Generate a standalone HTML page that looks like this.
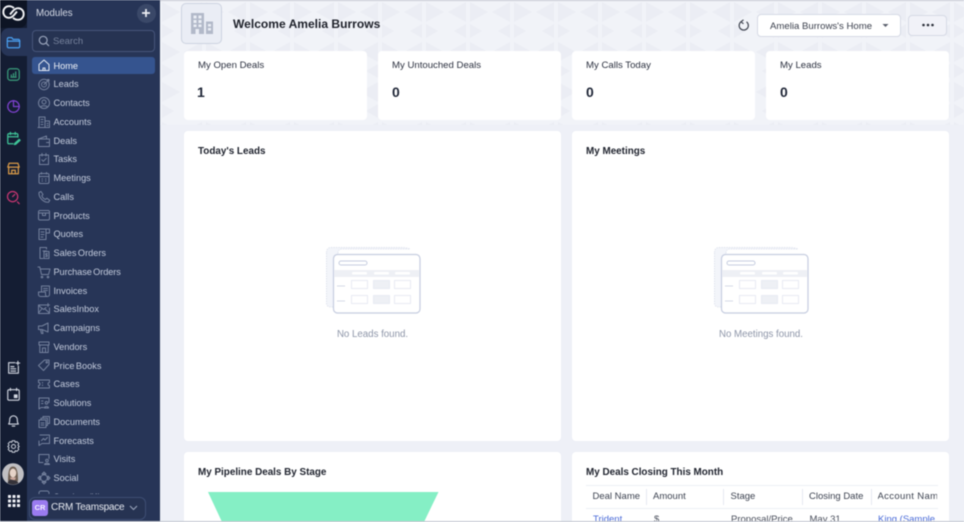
<!DOCTYPE html>
<html><head><meta charset="utf-8"><title>CRM Home</title>
<style>
*{box-sizing:border-box;margin:0;padding:0}
html,body{width:964px;height:522px;overflow:hidden;background:#eef0f7;font-family:"Liberation Sans",sans-serif}
#root{position:relative;width:964px;height:522px;overflow:hidden;filter:blur(.4px)}
.abs{position:absolute}
.t{position:absolute;white-space:nowrap}
#rail{left:0;top:0;width:27px;height:522px;background:#141d33}
#side{left:27px;top:0;width:133px;height:522px;background:#273557}
#logoTile{left:0;top:0;width:27px;height:28px;background:#0d1424;border-radius:0 0 8px 0}
#active{left:1px;top:28px;width:26px;height:28px;background:#273557;border-radius:8px 0 0 8px}
.item{position:absolute;left:53.5px;font-size:9.2px;line-height:12px;color:#c3cbdc;white-space:nowrap;word-spacing:-1.1px}
.ic{position:absolute;left:37px;width:14px;height:14px;fill:none;stroke:#74819d;stroke-width:1;stroke-linecap:round;stroke-linejoin:round}
.r{position:absolute;left:6px;width:15px;height:15px;fill:none;stroke-width:1.4;stroke-linecap:round;stroke-linejoin:round}
.card{position:absolute;background:#fff;border-radius:4px}
.ct{position:absolute;font-size:9.6px;line-height:12px;color:#2c3140;white-space:nowrap}
.num{position:absolute;font-size:14px;line-height:16px;font-weight:bold;color:#1f2637}
.h{position:absolute;font-size:9.9px;line-height:12px;font-weight:bold;color:#20242f;white-space:nowrap}
.nf{position:absolute;font-size:9.7px;line-height:12px;color:#8d95a8;white-space:nowrap;text-align:center;width:120px}
.th{position:absolute;top:491px;font-size:9.5px;color:#3c4250;white-space:nowrap;line-height:12px}
.td{position:absolute;top:514px;font-size:9.5px;color:#4a4f5c;white-space:nowrap;line-height:12px}
.sep{position:absolute;top:489px;width:1px;height:16px;background:#e6e9f2}
</style></head><body>
<div id="root">
<svg class="abs" style="left:160px;top:0" width="804" height="125">
<defs><pattern id="p" width="44" height="40" patternUnits="userSpaceOnUse">
<path d="M2 2L20 12L2 22Z M42 2L24 12L42 22Z M2 24L14 31L2 38Z M42 24L30 31L42 38Z" fill="#ebedf4"/>
</pattern></defs>
<rect width="804" height="125" fill="#f1f3f8"/><rect width="804" height="125" fill="url(#p)"/>
</svg>
<div class="abs" style="left:160px;top:0;width:804px;height:1px;background:#c6cad4"></div>

<div id="rail" class="abs"></div><div id="side" class="abs"></div>
<div id="logoTile" class="abs"></div><div id="active" class="abs"></div>

<svg class="abs" style="left:2px;top:5px" width="23" height="16" viewBox="0 0 23 16" fill="none" stroke="#f2f3f6" stroke-width="1.9">
<path d="M12 3.2C10.5 1.800 9 1.200 7 1.200C3.600 1.200 1.300 3.800 1.300 7S3.600 12.800 7 12.800C9.500 12.800 11 11.300 12.500 9.500L15 6.500"/>
<path d="M11 12.800C12.500 14.200 14 14.800 16 14.800C19.400 14.800 21.700 12.200 21.700 9S19.400 3.200 16 3.200C13.500 3.200 12 4.700 10.500 6.500L8 9.500"/>
</svg>

<svg class="r" style="top:34.500px;stroke:#4a9ff0" viewBox="0 0 17 17"><path d="M1.500 4.500A1.500 1.500 0 0 1 3 3H6.500L8 5H14A1.500 1.500 0 0 1 15.500 6.500V13A1.500 1.500 0 0 1 14 14.500H3A1.500 1.500 0 0 1 1.500 13Z"/><path d="M1.500 7H15.500"/></svg>
<svg class="r" style="top:66.500px;stroke:#3a9d7c" viewBox="0 0 17 17"><rect x="2" y="2" width="13" height="13" rx="3"/><path d="M5.500 11.500H11.500M6 9V10M8.500 7.500V10M11 5.500V10"/></svg>
<svg class="r" style="top:98.500px;stroke:#7f42d0" viewBox="0 0 17 17"><circle cx="8.500" cy="8.500" r="6.500"/><path d="M8.500 2V8.500H15"/></svg>
<svg class="r" style="top:130.500px;stroke:#3fc498" viewBox="0 0 17 17"><path d="M13.500 7V4.500A1.500 1.500 0 0 0 12 3H3.500A1.500 1.500 0 0 0 2 4.500V13A1.500 1.500 0 0 0 3.500 14.500H8M2 6.500H13.500M5 1.500V4M10.500 1.500V4"/><path d="M10 14L15 9.500L16 10.500L11 15L9.500 15.300Z" fill="#3fc498"/></svg>
<svg class="r" style="top:160.500px;stroke:#d99a48" viewBox="0 0 17 17"><path d="M3.500 2.500H13.500L15 7H2ZM3 7V14.500H14V7M6.500 14.500V10.500H10.500V14.500"/></svg>
<svg class="r" style="top:189.500px;stroke:#c83672" viewBox="0 0 17 17"><circle cx="7.500" cy="7.500" r="5.800"/><path d="M7.500 7.500L10 5M13 13.500L15 15.500"/></svg>

<svg class="r" style="top:360px;stroke:#d0d5e0;stroke-width:1.300" viewBox="0 0 17 17"><path d="M10 3H3V15H14V7M5.500 7.500H9M5.500 10H11M5.500 12.500H11M13.500 1.500V5.500M11.500 3.500H15.500"/></svg>
<svg class="r" style="top:387px;stroke:#d0d5e0;stroke-width:1.300" viewBox="0 0 17 17"><rect x="2" y="3" width="13" height="12" rx="1.500"/><path d="M5 1.500V4M12 1.500V4"/><rect x="9.500" y="9" width="3" height="3" fill="#d0d5e0"/></svg>
<svg class="r" style="top:413px;stroke:#d0d5e0;stroke-width:1.300" viewBox="0 0 17 17"><path d="M3 12.500C4.200 11 4.200 9.500 4.200 7.500A4.300 4.300 0 0 1 12.800 7.500C12.800 9.500 12.800 11 14 12.500ZM7 14.800H10"/></svg>
<svg class="r" style="top:439px;stroke:#d0d5e0;stroke-width:1.100" viewBox="0 0 17 17"><circle cx="8.500" cy="8.500" r="2.300"/><path d="M7 2H10L10.500 3.800L12.300 3L14.500 5.200L13.500 7L15 8.500L13.500 10L14.500 11.800L12.300 14L10.500 13.200L10 15H7L6.500 13.200L4.700 14L2.500 11.800L3.500 10L2 8.500L3.500 7L2.500 5.200L4.700 3L6.500 3.800Z"/></svg>

<svg class="abs" style="left:2px;top:463px" width="22" height="22" viewBox="0 0 22 22">
<defs><clipPath id="av"><circle cx="11" cy="11" r="10.500"/></clipPath></defs>
<circle cx="11" cy="11" r="10.800" fill="#d5d7dc"/>
<g clip-path="url(#av)"><rect width="22" height="22" fill="#c0bfc2"/><path d="M6 18C6 9 7 3.500 11 3.500S16 9 16 18Z" fill="#6f5f52"/><ellipse cx="11" cy="10" rx="3.300" ry="4.500" fill="#e6d3c8"/><path d="M8 14.500H14L13 17H9Z" fill="#caa79c"/><path d="M5 22C6 17 8 16 11 17S16 17 17 22Z" fill="#35333a"/></g>
</svg>
<svg class="abs" style="left:7.500px;top:495px" width="12" height="12" fill="#eef0f5">
<rect x="0" y="0" width="3" height="3" rx=".5"/><rect x="4.500" y="0" width="3" height="3" rx=".5"/><rect x="9" y="0" width="3" height="3" rx=".5"/>
<rect x="0" y="4.500" width="3" height="3" rx=".5"/><rect x="4.500" y="4.500" width="3" height="3" rx=".5"/><rect x="9" y="4.500" width="3" height="3" rx=".5"/>
<rect x="0" y="9" width="3" height="3" rx=".5"/><rect x="4.500" y="9" width="3" height="3" rx=".5"/><rect x="9" y="9" width="3" height="3" rx=".5"/>
</svg>

<div class="t" style="left:36px;top:7.500px;font-size:9.700px;line-height:12px;color:#d5dae5">Modules</div>
<div class="abs" style="left:136.500px;top:3.500px;width:19px;height:19px;border-radius:50%;background:#3a4868"></div>
<svg class="abs" style="left:141px;top:8px" width="10" height="10" stroke="#eef0f5" stroke-width="1.700"><path d="M5 1V9M1 5H9"/></svg>
<div class="abs" style="left:32px;top:30px;width:123px;height:22px;border:1px solid #46557a;border-radius:4px;background:#263352"></div>
<svg class="abs" style="left:38px;top:35px" width="12" height="12" fill="none" stroke="#9aa5bc" stroke-width="1.200"><circle cx="5.200" cy="5.200" r="3.900"/><path d="M8.200 8.200L11 11"/></svg>
<div class="t" style="left:53px;top:35.500px;font-size:9.500px;line-height:12px;color:#76829c">Search</div>
<div class="abs" style="left:32px;top:57px;width:123px;height:17px;border-radius:3px;background:#35548f"></div>

<svg class="ic" style="top:58px;stroke:#e4e9f3" viewBox="0 0 14 14"><path d="M2 6.500L7 2L12 6.500V12.500H2Z"/><path d="M6 12.500V10H8V12.500"/></svg>
<div class="item" style="top:59.500px;color:#eef1f7">Home</div>

<svg class="ic" style="top:77px" viewBox="0 0 14 14"><circle cx="7" cy="7.500" r="5.200"/><circle cx="7" cy="7.500" r="2.500"/><path d="M7 7.500L12 2.500M10.500 2.500H12V4"/></svg>
<div class="item" style="top:78px">Leads</div>
<svg class="ic" style="top:96px" viewBox="0 0 14 14"><circle cx="7" cy="7" r="5.500"/><circle cx="7" cy="6" r="2"/><path d="M3.500 11C4.500 9.300 9.500 9.300 10.500 11"/></svg>
<div class="item" style="top:97px">Contacts</div>
<svg class="ic" style="top:115px" viewBox="0 0 14 14"><path d="M2 12.500V2H8V12.500M8 6H12.500V12.500H1M4 4.500H6M4 7H6M4 9.500H6M10 8.500H11M10 10.500H11"/></svg>
<div class="item" style="top:116px">Accounts</div>
<svg class="ic" style="top:134px" viewBox="0 0 14 14"><path d="M1.500 5H12.500V12.500H1.500ZM1.500 5L9.500 2V5M9.500 8.500H12.500"/></svg>
<div class="item" style="top:134.500px">Deals</div>
<svg class="ic" style="top:152px" viewBox="0 0 14 14"><path d="M2.500 3H11.500V12.500H2.500ZM5 1.500V4M9 1.500V4M4.800 7.800L6.300 9.300L9.300 6.300"/></svg>
<div class="item" style="top:153px">Tasks</div>
<svg class="ic" style="top:171px" viewBox="0 0 14 14"><rect x="2" y="2.500" width="10" height="10" rx="1.500"/><path d="M2 5.500H12M4.500 1.500V3M9.500 1.500V3M5 8H5.500M8.500 8H9M5 10H5.500M8.500 10H9"/></svg>
<div class="item" style="top:172px">Meetings</div>
<svg class="ic" style="top:190px" viewBox="0 0 14 14"><path d="M2 2.500L4 1.500L6 4.500L4.800 5.800C5.500 7.500 6.800 8.800 8.500 9.500L9.800 8.200L12.800 10.300L11.500 12.300C6.500 12.500 1.500 7.500 2 2.500Z"/></svg>
<div class="item" style="top:191px">Calls</div>
<svg class="ic" style="top:208px" viewBox="0 0 14 14"><rect x="1.500" y="2.500" width="11" height="9.500" rx="1.500"/><path d="M1.500 5H12.500M5.500 5V7.500H8.500V5"/></svg>
<div class="item" style="top:209.500px">Products</div>
<svg class="ic" style="top:227px" viewBox="0 0 14 14"><path d="M2 2H9V12.500H2ZM9 2H12.500V6H9M4 5H7M4 7.500H7M4 10H6"/></svg>
<div class="item" style="top:228px">Quotes</div>
<svg class="ic" style="top:246px" viewBox="0 0 14 14"><path d="M9.500 3V1.500H3V12.500H6M6 5H9.500M7 5.500H12V12.500H7Z"/><path d="M10.500 7.500H8.800V9H10.200V10.500H8.500"/></svg>
<div class="item" style="top:247px">Sales Orders</div>
<svg class="ic" style="top:265px" viewBox="0 0 14 14"><path d="M1 2H2.800L4.500 9.500H11.500L13 4H3.300"/><circle cx="5" cy="12" r=".8"/><circle cx="11" cy="12" r=".8"/></svg>
<div class="item" style="top:265.500px;letter-spacing:-.07px">Purchase Orders</div>
<svg class="ic" style="top:284px" viewBox="0 0 14 14"><path d="M4.500 8V2H12.500V10.500A2 2 0 0 1 10.500 12.500H3.500A2 2 0 0 1 1.500 10.500V8H8.500V10.500A2 2 0 0 0 10.500 12.500M6.500 4.500H10.500M6.500 6.500H10.500"/></svg>
<div class="item" style="top:284.500px">Invoices</div>
<svg class="ic" style="top:302px" viewBox="0 0 14 14"><path d="M9.500 3H1.500V11.500H12.500V6M1.500 3.500L6.500 7.500L9 5.500M1.500 11L5 6.500M12.500 11L8 7M11 1.500V4.500M9.500 3H12.500"/></svg>
<div class="item" style="top:303px">SalesInbox</div>
<svg class="ic" style="top:321px" viewBox="0 0 14 14"><path d="M1.500 5H5L11 2V11L5 8.500H1.500ZM3.500 8.500L4.500 12.500H6L5.200 8.500"/></svg>
<div class="item" style="top:322px">Campaigns</div>
<svg class="ic" style="top:340px" viewBox="0 0 14 14"><path d="M2 2H12V5H2ZM2.800 5V12.500H11.200V5M5.500 12.500V8H8.500V12.500"/></svg>
<div class="item" style="top:340.500px">Vendors</div>
<svg class="ic" style="top:358px" viewBox="0 0 14 14"><path d="M7.500 2H12V6.500L6.500 12.500L1.500 7.500Z"/><circle cx="9.800" cy="4.200" r=".8"/></svg>
<div class="item" style="top:359.500px">Price Books</div>
<svg class="ic" style="top:377px" viewBox="0 0 14 14"><path d="M1.500 3H12.500V5.500A1.500 1.500 0 0 0 12.500 8.500V11H1.500V8.500A1.500 1.500 0 0 0 1.500 5.500ZM5.500 5.500V6M5.500 8V8.500"/></svg>
<div class="item" style="top:378px">Cases</div>
<svg class="ic" style="top:396px" viewBox="0 0 14 14"><path d="M6.500 11.500H4L2 13V2H12V6.500M4.500 5H6M4.500 7.500H6"/><circle cx="9.500" cy="6.800" r="1.300"/><path d="M7.500 12C7.500 10 11.500 10 11.500 12Z"/></svg>
<div class="item" style="top:397px">Solutions</div>
<svg class="ic" style="top:415px" viewBox="0 0 14 14"><path d="M2 5H9V12.500H2ZM4 5V3.200H10.500V10.500H9M6 3.200V1.500H12.500V8.500H10.500M4 8H7M4 10H7"/></svg>
<div class="item" style="top:415.500px">Documents</div>
<svg class="ic" style="top:433px" viewBox="0 0 14 14"><path d="M3 2H12.500V10.500H5L2 12.500V8M4.500 7.500L6.500 5.500L8 7L10.500 4.500"/></svg>
<div class="item" style="top:434.500px">Forecasts</div>
<svg class="ic" style="top:452px" viewBox="0 0 14 14"><path d="M6 10.500H2V2.500H12V6.500"/><circle cx="10" cy="8.500" r="1.300"/><path d="M7.500 12.500C7.500 10.800 12.500 10.800 12.500 12.500Z"/></svg>
<div class="item" style="top:453px">Visits</div>
<svg class="ic" style="top:471px" viewBox="0 0 14 14"><circle cx="7" cy="7" r="3.300"/><path d="M7 1L9 3H5ZM13 7L11 9V5ZM7 13L5 11H9ZM1 7L3 5V9Z"/></svg>
<div class="item" style="top:472px">Social</div>
<div class="item" style="top:490.500px;clip-path:inset(0 0 8px 0)">Services/Kits</div>
<svg class="ic" style="top:489px;clip-path:inset(0 0 9px 0)" viewBox="0 0 14 14"><rect x="2" y="2" width="10" height="10" rx="2"/></svg>

<div class="abs" style="left:27px;top:494px;width:133px;height:28px;background:#273557"></div>
<div class="abs" style="left:29px;top:496.500px;width:117px;height:23px;border:1px solid #3e4e74;border-radius:6px;background:#263352"></div>
<div class="abs" style="left:32px;top:499.500px;width:16px;height:16px;border-radius:3px;background:#9a7bf0;color:#f4f1ff;font-size:7.500px;font-weight:bold;line-height:16px;text-align:center">CR</div>
<div class="t" style="left:51px;top:501.500px;font-size:10px;line-height:12px;color:#e6e9f0;letter-spacing:-.25px">CRM Teamspace</div>
<svg class="abs" style="left:129px;top:505px" width="9" height="6" fill="none" stroke="#9aa5bc" stroke-width="1.100"><path d="M1 1L4.500 4.500L8 1"/></svg>

<div class="abs" style="left:181px;top:3px;width:41px;height:41px;border:1px solid #cdd3e0;border-radius:5px;background:#eaedf5"></div>
<svg class="abs" style="left:190px;top:12px" width="24" height="24" fill="#b2b9c9"><path d="M1 22V1H14V22H9V17H5.500V22Z"/><rect x="16" y="9.500" width="7" height="12.500"/><g fill="#eaedf5"><rect x="3.500" y="3.500" width="3" height="3"/><rect x="8.500" y="3.500" width="3" height="3"/><rect x="3.500" y="8" width="3" height="3"/><rect x="8.500" y="8" width="3" height="3"/><rect x="3.500" y="12.500" width="3" height="2.500"/><rect x="8.500" y="12.500" width="3" height="2.500"/><rect x="18" y="12" width="3" height="2.500"/><rect x="18" y="16" width="3" height="2.500"/></g></svg>
<div class="t" style="left:233px;top:16.500px;font-size:12.050px;line-height:15px;font-weight:bold;color:#1d2029">Welcome Amelia Burrows</div>

<svg class="abs" style="left:738px;top:19px" width="12" height="13" fill="none" stroke="#3f4450" stroke-width="1.200"><path d="M8.500 2.800A4.600 4.600 0 1 1 3 2.800"/><path d="M5.500 .8L3 2.800L5.500 4.800"/></svg>
<div class="abs" style="left:757px;top:14px;width:144px;height:23px;background:#fff;border:1px solid #d6dae5;border-radius:4px"></div>
<div class="t" style="left:770px;top:20.500px;font-size:9.600px;line-height:12px;color:#3a3f4c">Amelia Burrows's Home</div>
<svg class="abs" style="left:882px;top:23.500px" width="7" height="4" fill="#5a5f6c"><path d="M.5 0H6.500L3.500 3Z"/></svg>
<div class="abs" style="left:908px;top:14.500px;width:39px;height:21px;background:#f1f2f8;border:1px solid #d6dae5;border-radius:4px"></div>
<svg class="abs" style="left:921.500px;top:23px" width="12" height="4" fill="#2a2e38"><circle cx="1.500" cy="2" r="1.300"/><circle cx="6" cy="2" r="1.300"/><circle cx="10.500" cy="2" r="1.300"/></svg>

<div class="card" style="left:184px;top:51px;width:183px;height:69px"></div>
<div class="card" style="left:378px;top:51px;width:183px;height:69px"></div>
<div class="card" style="left:572px;top:51px;width:183px;height:69px"></div>
<div class="card" style="left:766px;top:51px;width:183px;height:69px"></div>
<div class="ct" style="left:198px;top:60px">My Open Deals</div>
<div class="ct" style="left:392px;top:60px">My Untouched Deals</div>
<div class="ct" style="left:586px;top:60px">My Calls Today</div>
<div class="ct" style="left:780px;top:60px">My Leads</div>
<div class="num" style="left:197px;top:83.500px">1</div>
<div class="num" style="left:392px;top:83.500px">0</div>
<div class="num" style="left:586px;top:83.500px">0</div>
<div class="num" style="left:780px;top:83.500px">0</div>

<div class="card" style="left:184px;top:131px;width:377px;height:310px"></div>
<div class="card" style="left:572px;top:131px;width:377px;height:310px"></div>
<div class="h" style="left:198px;top:145.500px">Today's Leads</div>
<div class="h" style="left:586px;top:145.500px">My Meetings</div>

<svg class="abs" style="left:326px;top:247px" width="95" height="67" fill="none">
<path d="M.5 6V56Q.5 60 5 60H12V6Q12 2 16 2H84Q80 .5 76 .5H5Q.5 .5 .5 6Z" fill="#f3f5fa" stroke="#e1e5ef" stroke-dasharray="1.500 1"/>
<rect x="7.500" y="7.500" width="86.500" height="58.500" rx="4" fill="#fff" stroke="#c6cde0" stroke-width="1.200"/>
<rect x="13" y="14" width="28" height="4" rx="2" stroke="#c6cde0"/>
<rect x="8.500" y="23" width="84.500" height="7" fill="#eef0f5"/>
<rect x="26" y="25" width="15" height="2.500" rx="1" fill="#fff"/><rect x="48" y="25" width="15" height="2.500" rx="1" fill="#fff"/><rect x="69" y="25" width="15" height="2.500" rx="1" fill="#fff"/>
<path d="M11 39H19M11 54H19" stroke="#d4d9e6"/>
<rect x="25.500" y="33.500" width="16" height="8" stroke="#e8ebf3"/><rect x="47.500" y="33.500" width="16" height="8" fill="#eef0f5" stroke="#e8ebf3"/><rect x="68.500" y="33.500" width="16" height="8" stroke="#e8ebf3"/>
<rect x="25.500" y="48.500" width="16" height="8" stroke="#e8ebf3"/><rect x="47.500" y="48.500" width="16" height="8" fill="#eef0f5" stroke="#e8ebf3"/><rect x="68.500" y="48.500" width="16" height="8" stroke="#e8ebf3"/>
</svg>
<svg class="abs" style="left:714px;top:247px" width="95" height="67" fill="none">
<path d="M.5 6V56Q.5 60 5 60H12V6Q12 2 16 2H84Q80 .5 76 .5H5Q.5 .5 .5 6Z" fill="#f3f5fa" stroke="#e1e5ef" stroke-dasharray="1.500 1"/>
<rect x="7.500" y="7.500" width="86.500" height="58.500" rx="4" fill="#fff" stroke="#c6cde0" stroke-width="1.200"/>
<rect x="13" y="14" width="28" height="4" rx="2" stroke="#c6cde0"/>
<rect x="8.500" y="23" width="84.500" height="7" fill="#eef0f5"/>
<rect x="26" y="25" width="15" height="2.500" rx="1" fill="#fff"/><rect x="48" y="25" width="15" height="2.500" rx="1" fill="#fff"/><rect x="69" y="25" width="15" height="2.500" rx="1" fill="#fff"/>
<path d="M11 39H19M11 54H19" stroke="#d4d9e6"/>
<rect x="25.500" y="33.500" width="16" height="8" stroke="#e8ebf3"/><rect x="47.500" y="33.500" width="16" height="8" fill="#eef0f5" stroke="#e8ebf3"/><rect x="68.500" y="33.500" width="16" height="8" stroke="#e8ebf3"/>
<rect x="25.500" y="48.500" width="16" height="8" stroke="#e8ebf3"/><rect x="47.500" y="48.500" width="16" height="8" fill="#eef0f5" stroke="#e8ebf3"/><rect x="68.500" y="48.500" width="16" height="8" stroke="#e8ebf3"/>
</svg>
<div class="nf" style="left:312.500px;top:329px">No Leads found.</div>
<div class="nf" style="left:701px;top:329px">No Meetings found.</div>

<div class="card" style="left:184px;top:452px;width:377px;height:80px"></div>
<div class="card" style="left:572px;top:452px;width:377px;height:80px"></div>
<div class="h" style="left:198px;top:466.500px">My Pipeline Deals By Stage</div>
<div class="h" style="left:586px;top:466.500px">My Deals Closing This Month</div>
<svg class="abs" style="left:208px;top:492px" width="231" height="30"><path d="M0 0H230.500L216 30H14Z" fill="#85efc5"/></svg>

<div class="abs" style="left:586px;top:485px;width:352px;height:1px;background:#edeff5"></div>
<div class="abs" style="left:586px;top:507.500px;width:352px;height:1px;background:#edeff5"></div>
<div class="sep" style="left:646px"></div><div class="sep" style="left:723px"></div><div class="sep" style="left:802px"></div><div class="sep" style="left:871px"></div>
<div class="th" style="left:592.500px">Deal Name</div>
<div class="th" style="left:653px">Amount</div>
<div class="th" style="left:730.500px">Stage</div>
<div class="th" style="left:809px">Closing Date</div>
<div class="th" style="left:877.500px;width:59px;overflow:hidden;letter-spacing:.35px">Account Name</div>
<div class="td" style="left:593px;color:#4a6bd8">Trident</div>
<div class="td" style="left:654px">$</div>
<div class="td" style="left:731px">Proposal/Price</div>
<div class="td" style="left:809.500px">May 31</div>
<div class="td" style="left:878px;width:59px;overflow:hidden;color:#4a6bd8">King (Sample</div>
<div class="abs" style="left:0;top:521px;width:964px;height:1px;background:#c4c7cf"></div>
</div>
</body></html>
